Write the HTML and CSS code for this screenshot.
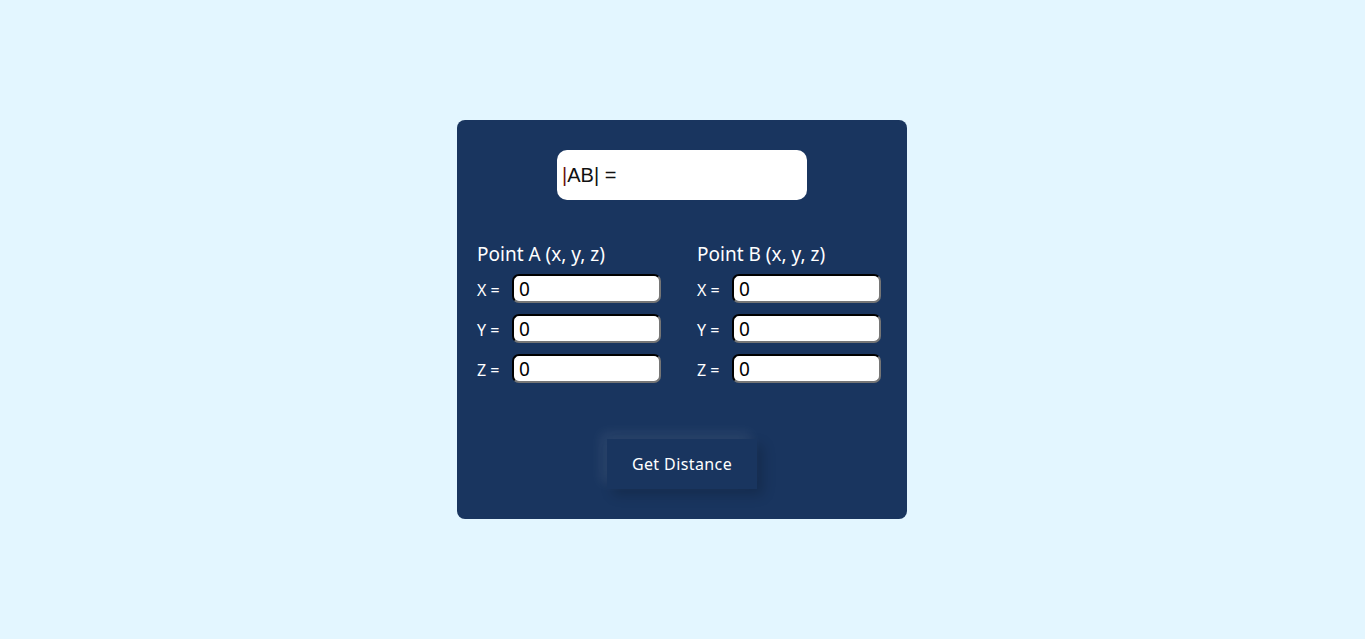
FILE: index.html
```html
<!DOCTYPE html>
<html>
<head>
<meta charset="utf-8">
<link rel="stylesheet" href="styles.css">
</head>
<body>
<main class="page">
  <section class="card">
    <div class="result"><span class="caret">|</span>AB| =</div>
    <div class="points">
      <div class="point">
        <h2 class="point-title">Point A (x, y, z)</h2>
        <div class="row"><label class="lbl">X =</label><input class="num" type="text" value="0"></div>
        <div class="row"><label class="lbl">Y =</label><input class="num" type="text" value="0"></div>
        <div class="row"><label class="lbl">Z =</label><input class="num" type="text" value="0"></div>
      </div>
      <div class="point">
        <h2 class="point-title">Point B (x, y, z)</h2>
        <div class="row"><label class="lbl">X =</label><input class="num" type="text" value="0"></div>
        <div class="row"><label class="lbl">Y =</label><input class="num" type="text" value="0"></div>
        <div class="row"><label class="lbl">Z =</label><input class="num" type="text" value="0"></div>
      </div>
    </div>
    <div class="actions"><button class="btn">Get Distance</button></div>
  </section>
</main>
</body>
</html>
```
FILE: styles.css
```css
html, body { margin: 0; padding: 0; }
body {
  background: #e3f6ff;
  font-family: "Noto Sans", "Open Sans", sans-serif;
  width: 1365px;
  height: 639px;
  overflow: hidden;
}
.page {
  display: flex;
  justify-content: center;
  padding-top: 120px;
  padding-right: 1px;
}
.card {
  width: 450px;
  height: 399px;
  box-sizing: border-box;
  background: #19355f;
  border-radius: 8px;
  padding: 30px 20px 0;
  display: flex;
  flex-direction: column;
}
.result {
  align-self: center;
  width: 250px;
  height: 50px;
  box-sizing: border-box;
  background: #fff;
  border-radius: 10px;
  padding-left: 5px;
  display: flex;
  align-items: center;
  font-family: "Liberation Sans", "Noto Sans", sans-serif;
  font-size: 20px;
  color: #111;
  padding-top: 1px;
}
.caret { color: #6e1212; }
.points {
  display: flex;
  margin-top: 42px;
}
.point {
  width: 220px;
  flex-shrink: 0;
}
.point-title {
  margin: 0 0 8px;
  font-weight: 400;
  font-size: 19px;
  line-height: 24px;
  color: #fff;
}
.row {
  display: flex;
  align-items: center;
  height: 29px;
  margin-bottom: 11px;
}
.lbl {
  color: #fff;
  font-size: 16px;
  width: 35px;
  flex-shrink: 0;
  padding-top: 2px;
}
.num {
  width: 149px;
  height: 29px;
  flex-shrink: 0;
  box-sizing: border-box;
  border: 2px inset #767676;
  border-top-color: #222;
  border-left-color: #222;
  border-radius: 7px;
  background: #fff;
  padding: 0 5px;
  font-family: "Noto Sans", "Open Sans", sans-serif;
  font-size: 19px;
  color: #000;
  outline: none;
}
.actions {
  display: flex;
  justify-content: center;
  margin-top: 45px;
}
.btn {
  width: 150px;
  height: 50px;
  background: #19355f;
  border: none;
  color: #fff;
  font-family: "Noto Sans", "Open Sans", sans-serif;
  font-size: 16px;
  letter-spacing: 0.4px;
  box-shadow: -6px -6px 12px rgba(255,255,255,0.08), 6px 6px 12px rgba(0,0,0,0.18);
  cursor: pointer;
}
```
